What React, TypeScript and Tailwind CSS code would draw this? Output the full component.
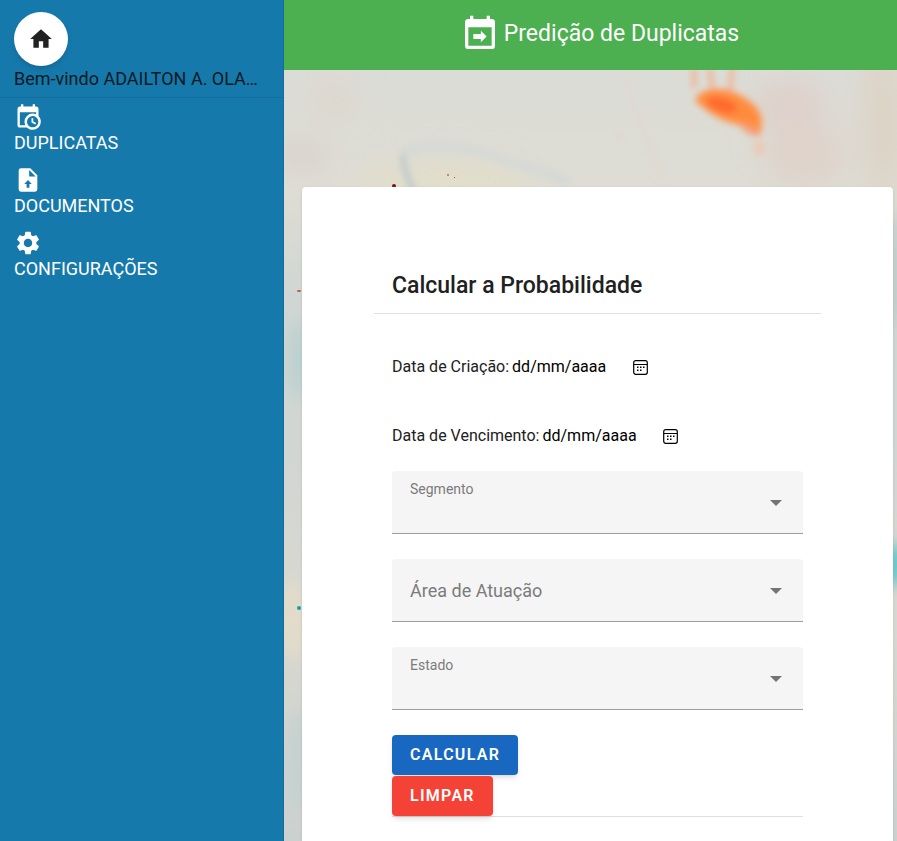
import { useState } from "react";
import type { ReactNode } from "react";
import { MdSettings, MdHome } from "react-icons/md";

function CalendarClockIcon() {
  return (
    <svg viewBox="0 0 24 24" className="size-7" fill="currentColor" aria-hidden="true">
      <path d="M15,13H16.5V15.82L18.94,17.23L18.19,18.53L15,16.69V13M19,8H5V19H9.67C9.24,18.09 9,17.07 9,16A7,7 0 0,1 16,9C17.07,9 18.09,9.24 19,9.67V8M5,21C3.89,21 3,20.1 3,19V5C3,3.89 3.89,3 5,3H6V1H8V3H16V1H18V3H19A2,2 0 0,1 21,5V11.1C22.24,12.36 23,14.09 23,16A7,7 0 0,1 16,23C14.09,23 12.36,22.24 11.1,21H5M16,11.15A4.85,4.85 0 0,0 11.15,16C11.15,18.68 13.32,20.85 16,20.85A4.85,4.85 0 0,0 20.85,16C20.85,13.32 18.68,11.15 16,11.15Z" />
    </svg>
  );
}

function FileUploadIcon() {
  return (
    <svg viewBox="0 0 24 24" className="size-7" fill="currentColor" aria-hidden="true">
      <path
        fillRule="evenodd"
        d="M14,2H6A2,2 0 0,0 4,4V20A2,2 0 0,0 6,22H18A2,2 0 0,0 20,20V8L14,2M13,9V3.5L18.5,9H13M12,12L15.2,15.4H13.2V18.6H10.8V15.4H8.8L12,12Z"
      />
    </svg>
  );
}

function CalendarArrowIcon() {
  return (
    <svg viewBox="0 0 24 24" className="size-10" fill="currentColor" aria-hidden="true">
      <path
        fillRule="evenodd"
        d="M19,3H18V1H16V3H8V1H6V3H5A2,2 0 0,0 3,5V19A2,2 0 0,0 5,21H19A2,2 0 0,0 21,19V5A2,2 0 0,0 19,3M19,19H5V8H19V19M12.5,10L16,13.5L12.5,17V15H8V12H12.5V10Z"
      />
    </svg>
  );
}

function DatePickerIcon() {
  return (
    <svg viewBox="0 0 15 15" className="size-[15px]" aria-hidden="true">
      <rect x="0.7" y="0.7" width="13.6" height="13.6" rx="2" fill="none" stroke="black" strokeWidth="1.2" />
      <path d="M1 4.5H14" stroke="black" strokeWidth="1" />
      <path
        d="M7 6.5h1.5V8H7zM10 6.5h1.5V8H10zM4 6.5h1.5V8H4zM4 9.5h1.5V11H4zM7 9.5h1.5V11H7z"
        fill="black"
      />
    </svg>
  );
}

function PaintedBackdrop() {
  return (
    <svg
      className="absolute inset-0 h-full w-full"
      viewBox="0 0 613 771"
      preserveAspectRatio="xMidYMin slice"
      aria-hidden="true"
    >
      <defs>
        <filter id="wash" x="-100%" y="-100%" width="300%" height="300%">
          <feGaussianBlur stdDeviation="14" />
        </filter>
        <filter id="edge" x="-200%" y="-50%" width="500%" height="200%">
          <feGaussianBlur stdDeviation="7" />
        </filter>
        <filter id="soft" x="-50%" y="-50%" width="200%" height="200%">
          <feGaussianBlur stdDeviation="3" />
        </filter>
        <linearGradient id="paper" x1="0" y1="0" x2="0" y2="1">
          <stop offset="0" stopColor="#dbdcd6" />
          <stop offset="0.16" stopColor="#dedcd4" />
          <stop offset="0.3" stopColor="#cfd6d3" />
          <stop offset="0.55" stopColor="#d3d6d2" />
          <stop offset="0.7" stopColor="#d9d8d0" />
          <stop offset="1" stopColor="#cbd1cf" />
        </linearGradient>
      </defs>
      <rect width="613" height="771" fill="url(#paper)" />
      <g filter="url(#wash)">
        <ellipse cx="50" cy="30" rx="24" ry="20" fill="#ddd7cd" />
        <ellipse cx="18" cy="85" rx="25" ry="12" fill="#d9d0c9" />
        <ellipse cx="160" cy="112" rx="90" ry="22" fill="#e2decb" />
        <ellipse cx="505" cy="35" rx="38" ry="24" fill="#dfd0ca" />
        <ellipse cx="520" cy="85" rx="42" ry="32" fill="#dfd3cb" />
        <ellipse cx="600" cy="50" rx="22" ry="80" fill="#ddd3c6" />
      </g>
      <g filter="url(#edge)">
        <ellipse cx="14" cy="290" rx="9" ry="40" fill="#b9d0d0" />
        <ellipse cx="8" cy="550" rx="12" ry="40" fill="#e3dcc9" />
        <ellipse cx="14" cy="690" rx="9" ry="50" fill="#c3d1d0" />
        <ellipse cx="613" cy="200" rx="7" ry="60" fill="#bccbca" />
        <ellipse cx="613" cy="495" rx="10" ry="22" fill="#5ec6c8" />
      </g>
      <g filter="url(#soft)" fill="none" strokeLinecap="round">
        <path d="M120 82C150 72 190 78 215 88S262 100 282 112" stroke="#d6d9d5" strokeWidth="10" />
        <path d="M119 88Q121 106 129 118" stroke="#c5cccb" strokeWidth="7" />
        <path d="M342 5Q349 38 360 62T378 106" stroke="#e0d8cf" strokeWidth="4" />
        <path d="M410 0V16M426 0L428 16M448 0L446 20" stroke="#eeb595" strokeWidth="5" />
        <path
          d="M412 30Q418 19 434 20T462 30Q474 38 476 46Q478 60 474 64L456 54Q432 50 412 30Z"
          fill="#ff8c3c"
          stroke="#fc9c5c"
          strokeWidth="3"
        />
        <ellipse cx="438" cy="35" rx="16" ry="7" transform="rotate(15 438 35)" fill="#ff6a2f" />
        <ellipse cx="466" cy="60" rx="11" ry="4" transform="rotate(28 466 60)" fill="#f3a27c" />
        <ellipse cx="475" cy="78" rx="6" ry="7" fill="#ecc9b3" />
        <circle cx="335" cy="65" r="2" fill="#efc9a4" />
      </g>
      <circle cx="110" cy="116" r="2" fill="#7b1020" />
      <rect x="163" y="104" width="2" height="2" fill="#c9838a" />
      <rect x="170" y="107" width="1" height="1" fill="#d04444" />
      <rect x="13" y="220" width="4" height="2" rx="1" fill="#c7643f" />
      <rect x="13" y="536" width="4" height="4" rx="2" fill="#16a0a8" />
    </svg>
  );
}

function NavItem({ icon, label }: { icon: ReactNode; label: string }) {
  return (
    <li>
      <a href="#" className="block text-white">
        {icon}
        <span className="block text-lg leading-6">{label}</span>
      </a>
    </li>
  );
}

function DateField({ id, label }: { id: string; label: string }) {
  return (
    <div className="flex h-6 items-center">
      <label htmlFor={id} className="whitespace-nowrap text-[#212121]">
        {label}
      </label>
      <input
        id={id}
        type="text"
        inputMode="numeric"
        placeholder="dd/mm/aaaa"
        className="ml-[3px] w-[121px] bg-transparent text-black outline-none placeholder:text-black placeholder:opacity-100"
      />
      <button type="button" aria-label={"Abrir calendário: " + label}>
        <DatePickerIcon />
      </button>
    </div>
  );
}

function SelectField({
  id,
  label,
  options,
  raised = false,
}: {
  id: string;
  label: string;
  options: string[];
  raised?: boolean;
}) {
  const [value, setValue] = useState("");
  const floating = raised || value !== "";
  return (
    <div className="relative h-[63px] rounded-t border-b border-[#9e9e9e] bg-[#f5f5f5]">
      <label
        htmlFor={id}
        className={
          floating
            ? "pointer-events-none absolute left-[18px] top-2 text-sm text-[#7b7b7b]"
            : "pointer-events-none absolute left-[18px] top-[18px] text-lg text-[#7b7b7b]"
        }
      >
        {label}
      </label>
      <select
        id={id}
        value={value}
        onChange={(event) => setValue(event.target.value)}
        className="h-full w-full appearance-none bg-transparent px-[18px] pt-5 text-[#212121] outline-none"
      >
        <option value="" />
        {options.map((option) => (
          <option key={option}>{option}</option>
        ))}
      </select>
      <svg
        viewBox="0 0 12 6"
        className="pointer-events-none absolute right-[21px] top-[29px] h-1.5 w-3"
        aria-hidden="true"
      >
        <path d="M0 0H12L6 6Z" fill="#757575" />
      </svg>
    </div>
  );
}

export default function App() {
  return (
    <div className="flex min-h-screen font-[Roboto,sans-serif] text-base">
      <aside className="w-[284px] shrink-0 border-r border-[#146c9a] bg-[#1679ac]">
        <div className="border-b border-[#146c9a] px-3.5 pb-1.5 pt-3">
          <button
            type="button"
            aria-label="Início"
            className="flex size-[54px] items-center justify-center rounded-full bg-white text-[#212121] shadow-md"
          >
            <MdHome className="size-[26px]" />
          </button>
          <p className="whitespace-nowrap pt-px text-lg leading-6 text-[#0b1a22]">Bem-vindo ADAILTON A. OLA…</p>
        </div>
        <nav aria-label="Menu principal">
          <ul className="flex flex-col gap-[11px] px-3.5 pt-[5px]">
            <NavItem icon={<CalendarClockIcon />} label="DUPLICATAS" />
            <NavItem icon={<FileUploadIcon />} label="DOCUMENTOS" />
            <NavItem icon={<MdSettings className="size-7" />} label="CONFIGURAÇÕES" />
          </ul>
        </nav>
      </aside>

      <div className="flex min-w-0 flex-1 flex-col">
        <header className="flex h-[70px] items-center justify-center gap-1 bg-[#4caf50] pb-0.5 pl-[18px] text-white">
          <CalendarArrowIcon />
          <h1 className="text-[23px] leading-8">Predição de Duplicatas</h1>
        </header>

        <main className="relative flex flex-1 flex-col overflow-hidden pl-[18px] pr-1 pt-[117px]">
          <PaintedBackdrop />
          <section className="relative flex-1 rounded-t bg-white px-[72px] pb-6 pt-[83px] shadow">
            <h2 className="border-b border-[#e0e0e0] px-[18px] pb-[11px] text-[23px] font-medium leading-8 text-[#212121]">
              Calcular a Probabilidade
            </h2>
            <form className="px-[18px] pt-[41px]" onSubmit={(event) => event.preventDefault()}>
              <div className="flex flex-col gap-[45px]">
                <DateField id="criacao" label="Data de Criação:" />
                <DateField id="vencimento" label="Data de Vencimento:" />
              </div>
              <div className="flex flex-col gap-[25px] pb-[25px] pt-[23px]">
                <SelectField id="segmento" label="Segmento" options={["Comércio", "Indústria", "Serviços"]} raised />
                <SelectField id="area" label="Área de Atuação" options={["Alimentos", "Saúde", "Tecnologia"]} />
                <SelectField id="estado" label="Estado" options={["PR", "RJ", "SP"]} raised />
              </div>
              <div className="flex flex-col items-start gap-px border-b border-[#e0e0e0] font-semibold tracking-[0.08em] text-white">
                <button type="submit" className="h-10 rounded bg-[#1867c0] px-[18px] shadow-md">
                  CALCULAR
                </button>
                <button type="reset" className="h-10 rounded bg-[#f44336] px-[18px] shadow-md">
                  LIMPAR
                </button>
              </div>
            </form>
          </section>
        </main>
      </div>
    </div>
  );
}
